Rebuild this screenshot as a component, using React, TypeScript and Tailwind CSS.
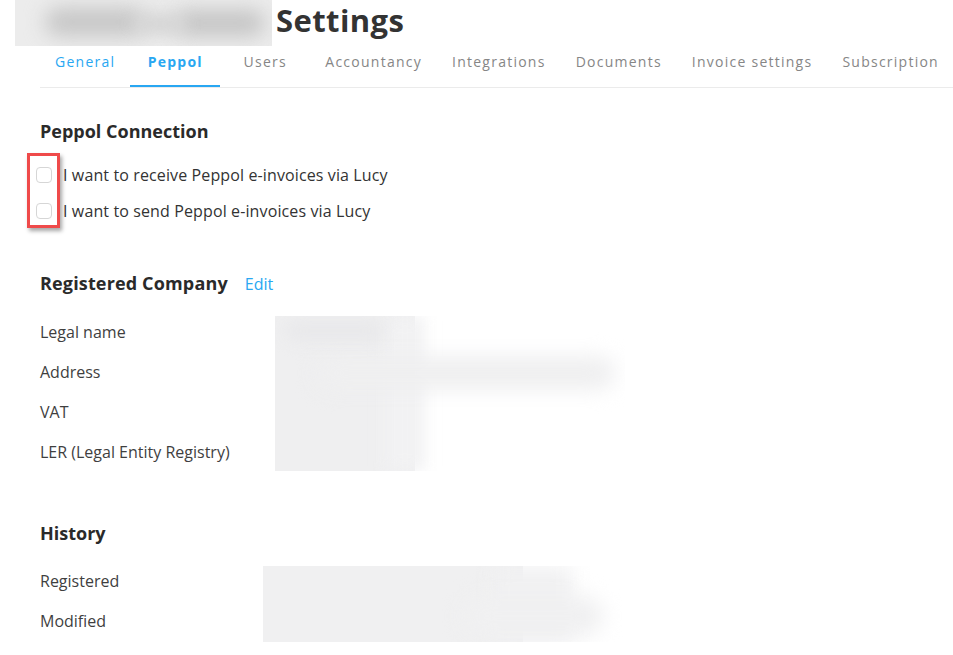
import React from "react";

const tabs = ["General", "Peppol", "Users", "Accountancy", "Integrations", "Documents", "Invoice settings", "Subscription"];

function Checkbox() {
  return <span className="block w-[16px] h-[16px] rounded-[4px] border border-[#d6d6d6] bg-white shrink-0" />;
}

export default function App() {
  const body = { fontFamily: "'Open Sans', Lato, sans-serif" };
  return (
    <div className="w-[953px] h-[655px] bg-white overflow-hidden text-[#333]" style={body}>
      {/* Header */}
      <div className="flex items-start h-[46px]">
        <div className="ml-[15px] w-[257px] h-[46px] bg-[#ececec] relative overflow-hidden">
          <div className="absolute left-[30px] top-[8px] w-[100px] h-[28px] rounded-full bg-[#c6c6c6] blur-[10px]" />
          <div className="absolute left-[160px] top-[10px] w-[90px] h-[26px] rounded-full bg-[#c4c4c4] blur-[10px]" />
          <div className="absolute left-[120px] top-[14px] w-[50px] h-[20px] rounded-full bg-[#d4d4d4] blur-[8px]" />
        </div>
        <h1 className="ml-[4px] text-[31px] leading-[40px] font-bold tracking-[0.4px] text-[#333]">Settings</h1>
      </div>

      {/* Tabs */}
      <div className="ml-[40px] border-b border-[#ebebeb] flex overflow-hidden">
        {tabs.map((t, i) => (
          <div
            key={t}
            className={
              "shrink-0 whitespace-nowrap min-w-[90px] text-center px-[15px] pt-[6px] pb-[13px] text-[14px] leading-[20px] tracking-[1.25px] border-b-2 " +
              (i === 1
                ? "border-[#29a7f2] text-[#29a7f2] font-bold"
                : i === 0
                ? "border-transparent text-[#29a7f2]"
                : "border-transparent text-[#868686]")
            }
          >
            {t}
          </div>
        ))}
      </div>

      <div className="pl-[40px]">
        {/* Peppol connection */}
        <h2 className="mt-[31px] text-[18px] leading-[24px] font-bold text-[#2a2a2a]">Peppol Connection</h2>
        <div className="relative mt-[22px] flex flex-col gap-[16px]">
          <label className="flex items-center gap-[11px] -ml-[4px] h-[20px] text-[16px] tracking-[0.12px] text-[#333]">
            <Checkbox />
            <span>I want to receive Peppol e-invoices via Lucy</span>
          </label>
          <label className="flex items-center gap-[11px] -ml-[4px] h-[20px] text-[16px] tracking-[0.12px] text-[#333]">
            <Checkbox />
            <span>I want to send Peppol e-invoices via Lucy</span>
          </label>
          <div className="absolute -left-[13px] -top-[12px] w-[33px] h-[75px] border-[3px] border-[#ef4a4a] shadow-[2px_3px_4px_rgba(0,0,0,0.35)]" />
        </div>

        {/* Registered company */}
        <div className="mt-[50px] flex items-baseline gap-[17px]">
          <h2 className="text-[18px] leading-[24px] font-bold tracking-[0.15px] text-[#2a2a2a]">Registered Company</h2>
          <span className="text-[16px] text-[#29a7f2]">Edit</span>
        </div>
        <div className="mt-[16px] flex">
          <div className="w-[235px] flex flex-col text-[16px] text-[#3f3f3f]">
            {["Legal name", "Address", "VAT", "LER (Legal Entity Registry)"].map((l) => (
              <div key={l} className="h-[40px] flex items-center">{l}</div>
            ))}
          </div>
          <div className="relative w-[350px] h-[155px] mt-[4px] overflow-hidden">
            <div className="absolute left-0 top-0 w-[140px] h-[155px] bg-[#efeff0]" />
            <div className="absolute left-[110px] top-0 w-[40px] h-[155px] bg-[#f2f2f3] blur-[8px]" />
            <div className="absolute left-[40px] top-[40px] w-[300px] h-[34px] rounded-full bg-[#efeff0] blur-[10px]" />
            <div className="absolute left-[10px] top-[5px] w-[100px] h-[20px] rounded-full bg-[#e8e8ea] blur-[8px]" />
          </div>
        </div>

        {/* History */}
        <h2 className="mt-[49px] text-[18px] leading-[24px] font-bold text-[#2a2a2a]">History</h2>
        <div className="mt-[16px] flex">
          <div className="w-[223px] flex flex-col text-[16px] text-[#3f3f3f]">
            {["Registered", "Modified"].map((l) => (
              <div key={l} className="h-[40px] flex items-center">{l}</div>
            ))}
          </div>
          <div className="relative w-[360px] h-[76px] mt-[5px] overflow-hidden">
            <div className="absolute left-0 top-0 w-[260px] h-[76px] bg-[#f0f0f1]" />
            <div className="absolute left-[230px] top-0 w-[80px] h-[76px] bg-[#f1f1f2] blur-[10px]" />
            <div className="absolute left-[200px] top-[30px] w-[140px] h-[40px] rounded-full bg-[#f0f0f1] blur-[10px]" />
          </div>
        </div>
      </div>
    </div>
  );
}
